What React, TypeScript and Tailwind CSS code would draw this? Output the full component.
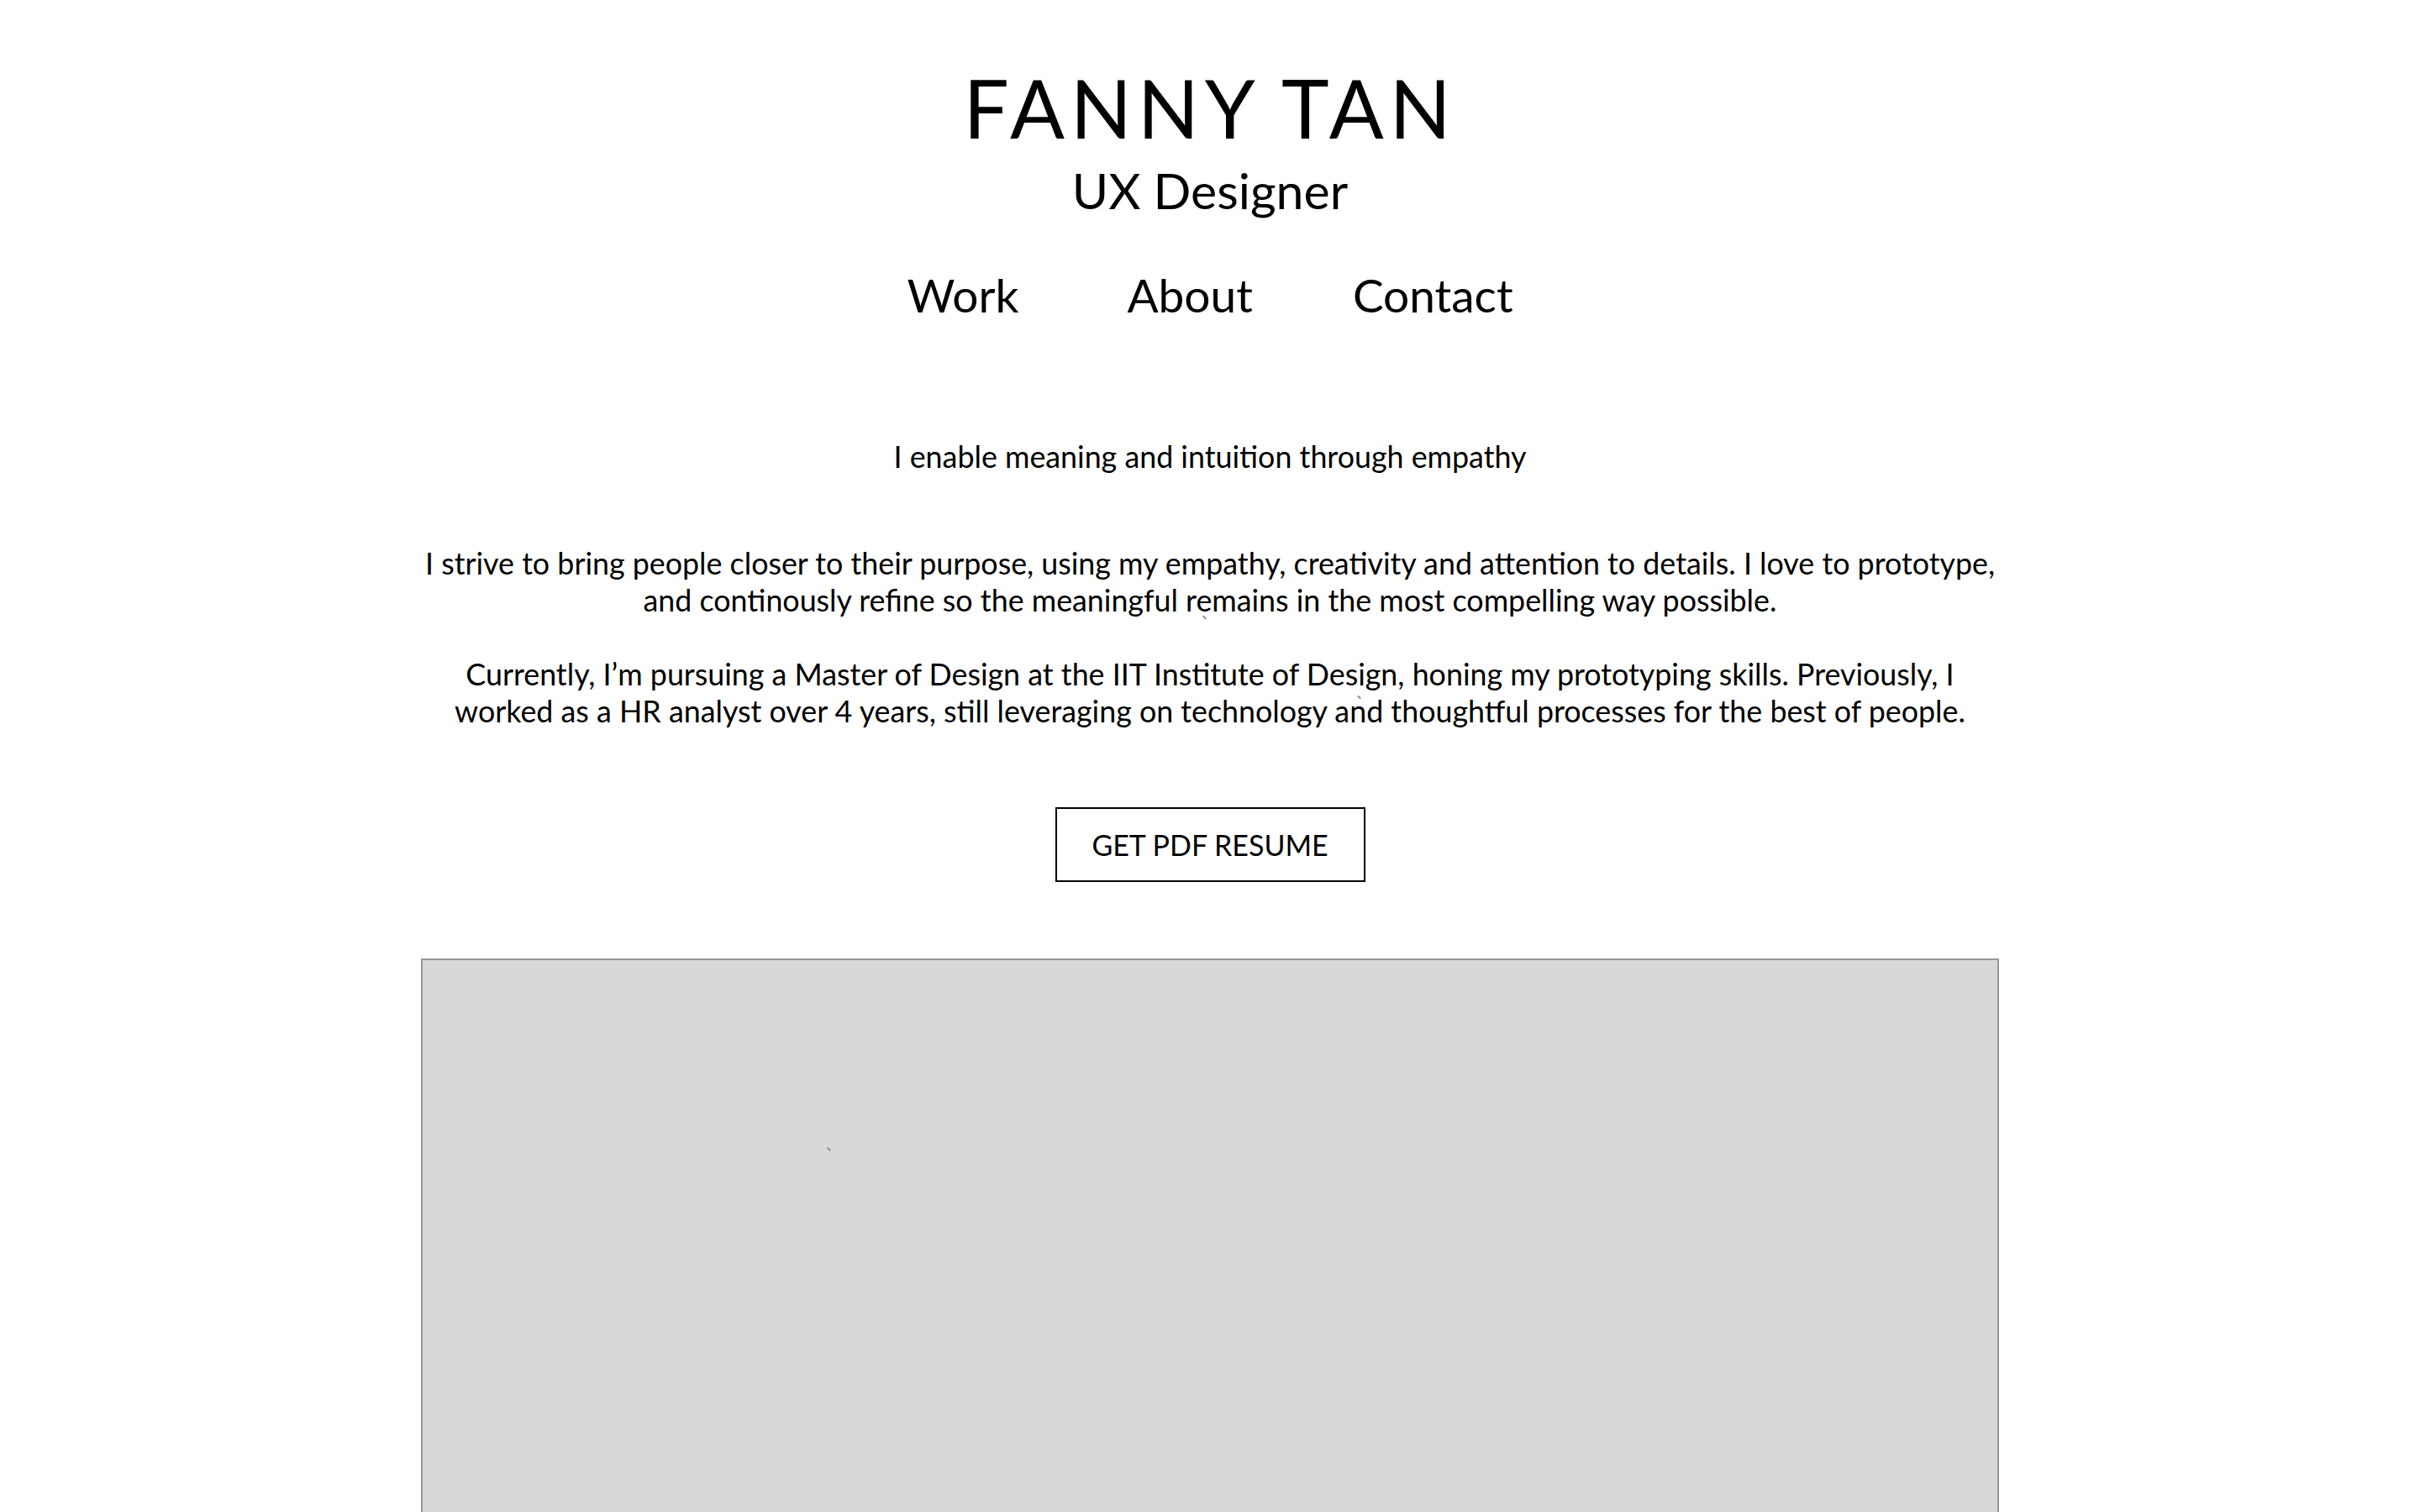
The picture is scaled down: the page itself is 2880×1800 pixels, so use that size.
import React from "react";

const Mark = ({ className }: { className: string }) => (
  <span className={`absolute block w-[5px] h-[2px] bg-[#8f8f8f] rotate-45 ${className}`} />
);

const App = () => {
  return (
    <div className="relative min-h-screen bg-white text-black font-['Lato',sans-serif] flex flex-col items-center pb-[200px]">
      <header className="flex flex-col items-center pt-[80px]">
        <h1 className="text-[96px] leading-none tracking-[0.07em] font-normal">FANNY TAN</h1>
        <p className="mt-[21px] text-[59px] leading-none">UX Designer</p>
      </header>

      <nav className="mt-[68px] flex text-[55px] leading-none">
        <a href="#work">Work</a>
        <a href="#about" className="ml-[129px]">About</a>
        <a href="#contact" className="ml-[119px]">Contact</a>
      </nav>

      <section className="mt-[143px] flex flex-col items-center text-center text-[35.8px] leading-[44px] whitespace-nowrap">
        <p>I enable meaning and intuition through empathy</p>
        <p className="mt-[83px]">
          I strive to bring people closer to their purpose, using my empathy, creativity and attention to details. I love to prototype,
          <br />
          and continously refine so the meaningful remains in the most compelling way possible.
        </p>
        <p className="mt-[44px]">
          Currently, I’m pursuing a Master of Design at the IIT Institute of Design, honing my prototyping skills. Previously, I
          <br />
          worked as a HR analyst over 4 years, still leveraging on technology and thoughtful processes for the best of people.
        </p>
      </section>

      <a
        href="#resume"
        className="mt-[92px] w-[369px] h-[89px] flex items-center justify-center border-2 border-black text-[34px] leading-none"
      >
        GET PDF RESUME
      </a>

      <div className="mt-[91px] w-[1878px] h-[900px] border-2 border-[#979797] bg-[#d8d8d8]" />

      <Mark className="left-[1431px] top-[734px]" />
      <Mark className="left-[1615px] top-[829px]" />
      <Mark className="left-[984px] top-[1367px]" />
    </div>
  );
};

export default App;
